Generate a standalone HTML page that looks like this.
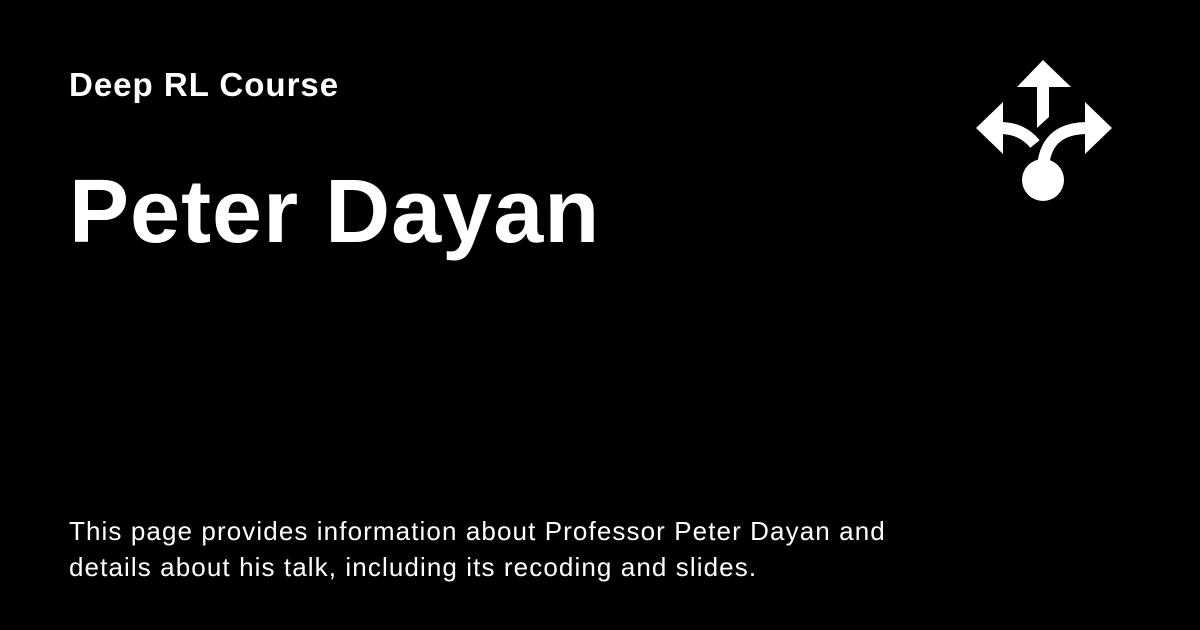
<!DOCTYPE html>
<html><head><style>
body{margin:0;width:1200px;height:630px;background:#000;overflow:hidden;font-family:"Liberation Sans",sans-serif;color:#fff;position:relative}
.a{position:absolute;left:69px;white-space:nowrap}
</style></head><body>
<div class="a" style="top:66px;font-size:33px;font-weight:bold;letter-spacing:1px">Deep RL Course</div>
<div class="a" style="top:161px;font-size:90px;font-weight:bold;letter-spacing:1px">Peter Dayan</div>
<div class="a" style="top:513px;font-size:26px;line-height:36px;letter-spacing:1.1px">This page provides information about Professor Peter Dayan and<br>details about his talk, including its recoding and slides.</div>
<svg style="position:absolute;left:0;top:0" width="1200" height="630">
<g fill="#fff">
<polygon points="1043,60 1071,87 1017,87"/>
<polygon points="1037,86 1049,86 1049,117 1037,128"/>
<polygon points="976,128 1003,102 1003,154"/>
<polygon points="1112,128 1085,102 1085,154"/>
<circle cx="1043" cy="180" r="21"/>
</g>
<g fill="none" stroke="#fff" stroke-width="12">
<path d="M1000 128 Q1022 128 1035 144"/>
<path d="M1088 128 Q1043 128 1043 172"/>
</g>
</svg>
</body></html>
